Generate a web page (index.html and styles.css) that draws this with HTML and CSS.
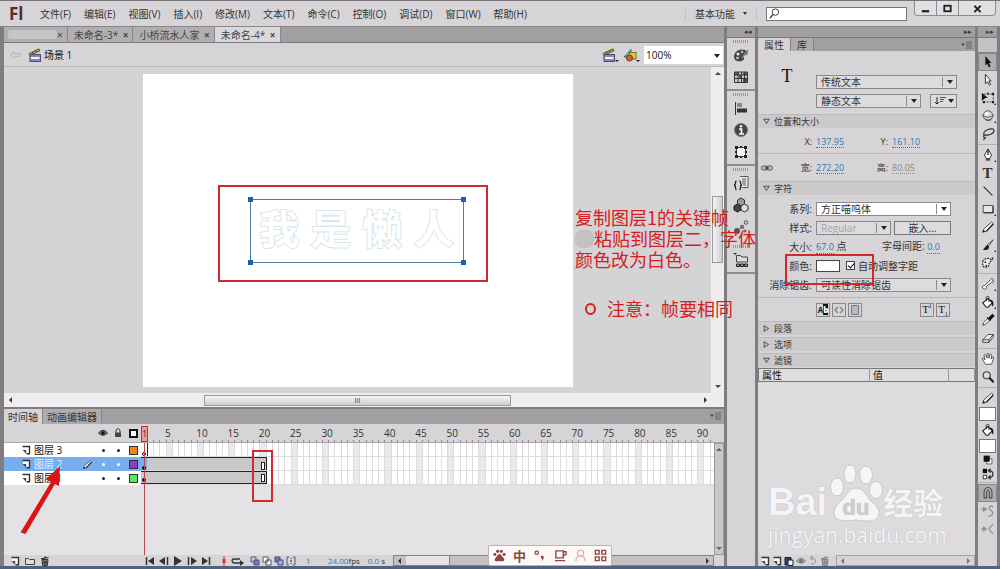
FILE: index.html
```html
<!DOCTYPE html>
<html lang="zh-CN">
<head>
    <meta charset="UTF-8">
    <meta name="viewport" content="width=device-width, initial-scale=1.0">
    <title>Flash - 未命名-4</title>
    <link rel="stylesheet" href="styles.css">
</head>
<body>
    <!-- shared icons -->
    <svg class="sprite" aria-hidden="true">
        <symbol id="clapper" viewBox="0 0 14 14">
            <rect x="2" y="6.500" width="10.500" height="7" fill="#8186bd" stroke="#4c4e72"/>
            <path d="M3 9h8.500v2H3z" fill="#f3f3fa"/>
            <path d="M1 5.500L11 .8l1 2L2 7.300z" fill="#a7a238" stroke="#4b4a20" stroke-width=".8"/>
            <path d="M4 4l1.500 1.500M7 2.700L8.500 4" stroke="#333" stroke-width=".8"/>
        </symbol>
        <symbol id="layer" viewBox="0 0 10 10">
            <path d="M2 1.500h6.500v7H6L2 5z" fill="#fff"/>
            <path d="M1.500 1.500h7v7.300H5.500" fill="none" stroke="#333" stroke-width="1.400"/>
            <path d="M1.500 5h3.700v3.800z" fill="#444"/>
        </symbol>
        <symbol id="trash" viewBox="0 0 10 10">
            <path d="M2 3.500h6L7.300 9.500H2.700z" fill="#777" stroke="#333"/>
            <path d="M1 2.800L8.500 1.500M4 1.500L6 .8M4.200 5v3M6 5v3" stroke="#222" fill="none"/>
        </symbol>
        <symbol id="pencil" viewBox="0 0 16 16">
            <path d="M2 14l1-3.500L12 2.500l2 1.800-8.500 8.700z" fill="#fff" stroke="#333"/>
            <path d="M6 13l8-8.500" stroke="#222" stroke-width="1.600"/>
            <path d="M2 14l1-3 2 2z" fill="#111"/>
        </symbol>
        <symbol id="bucket" viewBox="0 0 16 16">
            <path d="M2 9l6-5 5 5-5 5H6z" fill="#fff" stroke="#222" stroke-width="1.300"/>
            <path d="M6 7V3c0-2 3-2 3 0v5" fill="none" stroke="#222"/>
            <path d="M10 5.500c4 0 4.500 3 4 8-1-1-2-3-1.500-5z" fill="#111"/>
        </symbol>
        <symbol id="menu" viewBox="0 0 12 8">
            <path d="M0 2.500h4L2 5z" fill="#444"/>
            <path d="M5 1h6M5 3h6M5 5h6M5 7h6" stroke="#666"/>
        </symbol>
        <symbol id="eye" viewBox="0 0 10 8">
            <path d="M.5 4Q5-1.500 9.500 4 5 8.500.5 4z" fill="#777" stroke="#333"/>
            <circle cx="5" cy="4" r="1.800" fill="#111"/>
        </symbol>
    </svg>

    <div class="app">
        <header class="menubar">
            <div class="logo">Fl</div>
            <nav class="menus">
                <button>文件(F)</button>
                <button>编辑(E)</button>
                <button>视图(V)</button>
                <button>插入(I)</button>
                <button>修改(M)</button>
                <button>文本(T)</button>
                <button>命令(C)</button>
                <button>控制(O)</button>
                <button>调试(D)</button>
                <button>窗口(W)</button>
                <button>帮助(H)</button>
            </nav>
            <button class="workspace-switch">基本功能<span class="caret"></span></button>
            <div class="search">
                <svg viewBox="0 0 12 12"><circle cx="7" cy="4.500" r="3.500" fill="none" stroke="#333"/><path d="M4.500 7L1 11" stroke="#333" stroke-width="1.500"/></svg>
                <input type="text" aria-label="搜索">
            </div>
            <div class="window-buttons">
                <button aria-label="最小化"><svg viewBox="0 0 12 12"><path d="M2 9h8" stroke="#222" stroke-width="2.500"/></svg></button>
                <button aria-label="还原"><svg viewBox="0 0 12 12"><rect x="2.500" y="3" width="7" height="6" fill="none" stroke="#222" stroke-width="2"/></svg></button>
                <button class="close" aria-label="关闭"><svg viewBox="0 0 12 12"><path d="M2.500 3l7 7M9.500 3l-7 7" stroke="#222" stroke-width="2"/></svg></button>
            </div>
        </header>

        <div class="workspace">
            <main class="main">
                <div class="doc-tabs">
                    <button class="doc-tab first"><span class="smudge"></span>×</button>
                    <button class="doc-tab">未命名-3* <b>×</b></button>
                    <button class="doc-tab">小桥流水人家 <b>×</b></button>
                    <button class="doc-tab active">未命名-4* <b>×</b></button>
                </div>
                <div class="scene-bar">
                    <svg class="back" viewBox="0 0 12 10"><path d="M1 5l4-4v2.500h6v3H5V9z" fill="#cfcdd0" stroke="#bab8bb"/></svg>
                    <svg class="icon14"><use href="#clapper"/></svg>
                    <span class="scene-name">场景 1</span>
                    <button class="scene-button" aria-label="编辑场景"><svg class="icon14"><use href="#clapper"/></svg></button>
                    <button class="scene-button" aria-label="编辑元件"><svg class="icon14" viewBox="0 0 14 14"><path d="M1 9l7-7.500V9z" fill="#6fc3ae" stroke="#2c7663"/><rect x="6.500" y="4.500" width="6.500" height="6.500" fill="#d8d13c" stroke="#77711a"/><circle cx="6.500" cy="10" r="3" fill="#e4592f" stroke="#8a2c12"/></svg></button>
                    <div class="zoom select"><select aria-label="缩放"><option>100%</option></select></div>
                </div>

                <div class="stage">
                    <div class="pasteboard">
                        <div class="paper">
                            <div class="text-box">
                                <span>我</span><span>是</span><span>懒</span><span>人</span>
                                <i></i><i></i><i></i><i></i>
                            </div>
                            <div class="mark mark-text"></div>
                        </div>
                    </div>
                    <div class="vscroll"><span class="arrow up"></span><span class="thumb"></span><span class="arrow down"></span></div>
                </div>
                <div class="hscroll"><span class="arrow left"></span><span class="thumb">III</span><span class="arrow right"></span></div>

                <section class="timeline">
                    <div class="panel-tabs">
                        <button class="active">时间轴</button>
                        <button>动画编辑器</button>
                        <svg class="panel-menu"><use href="#menu"/></svg>
                    </div>
                    <div class="ruler-row">
                        <div class="layer-head">
                            <svg class="icon10"><use href="#eye"/></svg>
                            <svg class="icon10" viewBox="0 0 10 10"><path d="M3 5V3c0-3 4-3 4 0v2" fill="none" stroke="#333"/><path d="M2 4.500h6V9H2z" fill="#444"/></svg>
                            <span class="outline-box"></span>
                        </div>
                        <div class="ruler">
                            <span class="playhead">1</span>
                            <div class="ruler-marks">
                                <span>5</span><span>10</span><span>15</span><span>20</span><span>25</span><span>30</span>
                                <span>35</span><span>40</span><span>45</span><span>50</span><span>55</span><span>60</span>
                                <span>65</span><span>70</span><span>75</span><span>80</span><span>85</span><span>90</span>
                            </div>
                        </div>
                    </div>
                    <div class="layers">
                        <div class="layer-list">
                            <div class="layer">
                                <div class="layer-info"><svg class="icon10"><use href="#layer"/></svg><span class="name">图层 3</span><i class="dot"></i><i class="dot"></i><i class="chip orange"></i></div>
                                <div class="frames"><div class="first-frame"><i class="key empty"></i></div></div>
                            </div>
                            <div class="layer selected">
                                <div class="layer-info"><svg class="icon10"><use href="#layer"/></svg><span class="name">图层 2</span><svg class="edit"><use href="#pencil"/></svg><i class="dot"></i><i class="dot"></i><i class="chip purple"></i></div>
                                <div class="frames"><div class="span"><i class="key"></i><i class="end"></i></div></div>
                            </div>
                            <div class="layer">
                                <div class="layer-info"><svg class="icon10"><use href="#layer"/></svg><span class="name">图层 1</span><i class="dot"></i><i class="dot"></i><i class="chip green"></i></div>
                                <div class="frames"><div class="span"><i class="key"></i><i class="end"></i></div></div>
                            </div>
                            <div class="playline"></div>
                        </div>
                        <div class="layer-scroll"><span class="arrow up"></span><span class="arrow down"></span></div>
                    </div>
                    <div class="timeline-foot">
                        <div class="layer-tools">
                            <button aria-label="新建图层"><svg class="icon10"><use href="#layer"/></svg></button>
                            <button aria-label="新建文件夹"><svg class="icon10" viewBox="0 0 10 10"><path d="M.5 2.500h3l1 1h5v5h-9z" fill="#ddd" stroke="#444"/></svg></button>
                            <button aria-label="删除"><svg class="icon10"><use href="#trash"/></svg></button>
                        </div>
                        <div class="transport">
                            <button aria-label="第一帧"><svg class="icon10" viewBox="0 0 10 10"><path d="M9 1v8L3 5z" fill="#333"/><path d="M1.500 1v8" stroke="#333" stroke-width="1.500"/></svg></button>
                            <button aria-label="后退"><svg class="icon10" viewBox="0 0 10 10"><path d="M6 1v8L0 5z" fill="#333"/><path d="M8.500 1v8" stroke="#333" stroke-width="1.500"/></svg></button>
                            <button aria-label="播放"><svg class="icon10" viewBox="0 0 10 10"><path d="M1 0v10l8-5z" fill="#333"/></svg></button>
                            <button aria-label="前进"><svg class="icon10" viewBox="0 0 10 10"><path d="M4 1v8l6-4z" fill="#333"/><path d="M1.500 1v8" stroke="#333" stroke-width="1.500"/></svg></button>
                            <button aria-label="最后一帧"><svg class="icon10" viewBox="0 0 10 10"><path d="M1 1v8l6-4z" fill="#333"/><path d="M8.500 1v8" stroke="#333" stroke-width="1.500"/></svg></button>
                        </div>
                        <div class="onion">
                            <svg class="icon10" viewBox="0 0 10 10"><path d="M5 0v10" stroke="#c33"/><path d="M3.500 3h3v4h-3z" fill="#c33"/></svg>
                            <svg class="loop" viewBox="0 0 13 10"><path d="M9 3H3c-3 0-2 4 0 4h7" fill="none" stroke="#333" stroke-width="1.500"/><path d="M9 4l4 3-4 3z" fill="#333"/></svg>
                            <svg class="icon10" viewBox="0 0 10 10"><path d="M1 1h5v5H1z" fill="#ccd" stroke="#558"/><path d="M4 4h5v5H4z" fill="#77b" stroke="#558"/></svg>
                            <svg class="icon10" viewBox="0 0 10 10"><path d="M1 1h5v5H1zM4 4h5v5H4z" fill="#fff" stroke="#555"/></svg>
                            <svg class="icon10" viewBox="0 0 10 10"><path d="M1 1h5v5H1z" fill="#77b" stroke="#448"/><path d="M4 4h5v5H4z" fill="#aac" stroke="#448"/></svg>
                            <svg class="icon10" viewBox="0 0 10 10"><path d="M3 1H1v8h2M7 1h2v8H7" fill="none" stroke="#557"/><path d="M4 5h2M5 2v1M5 7v1" stroke="#222"/></svg>
                        </div>
                        <div class="frame-info"><a href="#">1</a><span class="fps"><a href="#">24.00</a>fps</span><span><a href="#">0.0</a> s</span></div>
                        <div class="frame-scroll"><span class="arrow left"></span><span class="thumb"></span><span class="arrow right"></span></div>
                    </div>
                </section>
            </main>

            <aside class="dock">
                <div class="strip">◂◂</div>
                <div class="dock-group">
                    <svg viewBox="0 0 16 16"><path d="M1 10c0-6 6-9 11-7 4 2 3 5 0 5-2 0-1 2-1 4s-9 5-10-2z" fill="#444"/><circle cx="5" cy="7" r="1.500" fill="#eee"/><circle cx="9" cy="5" r="1.300" fill="#bbb"/><circle cx="4.500" cy="11" r="1.300" fill="#ccc"/><path d="M9 11l6-8" stroke="#888" stroke-width="1.500"/></svg>
                    <svg viewBox="0 0 16 16"><path d="M1.500 3h13v10.500h-13z" fill="#ccc" stroke="#333"/><path d="M2 3h4v3H2zM6 6h3v4H6zM10 3h4v3h-4zM10 9h4v4h-4z" fill="#555"/><path d="M5 3v10M8.500 3v10M11.500 3v10M2 6h12M2 9.500h12" stroke="#333"/></svg>
                </div>
                <div class="dock-group">
                    <svg viewBox="0 0 16 16"><path d="M2.500 2v13" stroke="#333"/><path d="M4 3h5v4H4z" fill="#888"/><path d="M4 8.500h10v4H4z" fill="#333"/></svg>
                    <svg viewBox="0 0 16 16"><circle cx="8" cy="8" r="6.500" fill="#444" stroke="#777"/><path d="M6 7h2.500v4.500M6 12h5" fill="none" stroke="#fff" stroke-width="1.700"/><circle cx="8" cy="4.300" r="1.200" fill="#fff"/></svg>
                    <svg viewBox="0 0 16 16"><path d="M3.500 3.500h9v9h-9z" fill="#f5f5f5" stroke="#444"/><path d="M2 2h3v3H2zM11 2h3v3h-3zM2 11h3v3H2zM11 11h3v3h-3zM7 2h2v2H7zM7 12h2v2H7zM2 7h2v2H2zM12 7h2v2h-2z" fill="#222"/></svg>
                </div>
                <div class="dock-group tall">
                    <svg viewBox="0 0 16 16"><path d="M7 1.500h8v11H9" fill="#eee" stroke="#555"/><path d="M9 4h4M9 6h4M9 8h4M10 10h3" stroke="#555"/><path d="M3.500 6c-2 0 0 4-2.500 4 2.500 0 .5 4.500 2.500 4.500M6.500 6c2 0 0 4 2.500 4-2.500 0-.5 4.500-2.500 4.500" fill="none" stroke="#222" stroke-width="1.300"/></svg>
                    <svg viewBox="0 0 16 16"><path d="M8 1l3.500 2v4L8 9 4.500 7V3z" fill="#999" stroke="#333"/><path d="M4.500 7L8 9v4l-3.500 2L1 13V9z" fill="#444" stroke="#222"/><path d="M11.500 7L15 9v4l-3.500 2L8 13V9z" fill="#ddd" stroke="#333"/></svg>
                    <svg viewBox="0 0 16 16"><circle cx="4" cy="12" r="3" fill="#555"/><circle cx="9" cy="8" r="2.300" fill="#777"/><circle cx="13" cy="3.500" r="1.800" fill="#ccc" stroke="#555"/><circle cx="12" cy="12" r="1.500" fill="#666"/></svg>
                </div>
                <div class="dock-group">
                    <svg viewBox="0 0 16 16"><path d="M0 1h4L2 3z" fill="#333"/><path d="M3.500 3.500h4l1 1.500h6v5h-11z" fill="#ddd" stroke="#444"/><path d="M3.500 12h3v2.500h-3zM7.500 12h3v2.500h-3zM11.500 12h3v2.500h-3z" fill="#999" stroke="#222"/></svg>
                </div>
            </aside>

            <aside class="props">
                <div class="strip">▸▸</div>
                <div class="panel-tabs">
                    <button class="active">属性</button>
                    <button>库</button>
                    <svg class="panel-menu"><use href="#menu"/></svg>
                </div>
                <div class="text-type">
                    <span class="big-t">T</span>
                    <div class="type-fields">
                        <div class="select"><select aria-label="文本引擎"><option>传统文本</option></select></div>
                        <div class="type-row">
                            <div class="select"><select aria-label="文本类型"><option>静态文本</option></select></div>
                            <button class="direction" aria-label="改变文本方向"><svg viewBox="0 0 20 10"><path d="M3 1v7M1 6l2 2 2-2" fill="none" stroke="#222"/><path d="M6 1.500h6M6 3.500h4M6 5.500h3" stroke="#555"/><path d="M14 3h6l-3 4z" fill="#222"/></svg></button>
                        </div>
                    </div>
                </div>

                <h2 class="section open">位置和大小</h2>
                <div class="coords"><span></span><label>X:</label><a href="#">137.95</a><label>Y:</label><a href="#">161.10</a></div>
                <div class="coords lined"><svg class="link" viewBox="0 0 12 6"><rect x=".5" y="1" width="6" height="4" rx="2" fill="none" stroke="#444"/><rect x="5.500" y="1" width="6" height="4" rx="2" fill="none" stroke="#444"/><path d="M3 3h6" stroke="#444"/></svg><label>宽:</label><a href="#">272.20</a><label>高:</label><a href="#" class="off">80.05</a></div>

                <h2 class="section open">字符</h2>
                <div class="fields">
                    <div class="field"><label for="family">系列:</label><div class="select white wide"><select id="family"><option>方正喵呜体</option></select></div></div>
                    <div class="field"><label for="style">样式:</label><div class="select disabled"><select id="style" disabled><option>Regular</option></select></div><button class="embed">嵌入...</button></div>
                    <div class="field"><label>大小:</label><span><a href="#">67.0</a> 点</span><span class="spacing">字母间距: <a href="#">0.0</a></span></div>
                    <div class="field"><label for="color">颜色:</label><button id="color" class="swatch"></button><input type="checkbox" id="kern" checked><label for="kern" class="kern">自动调整字距</label></div>
                    <div class="field"><label for="alias">消除锯齿:</label><div class="select wide"><select id="alias"><option>可读性消除锯齿</option></select></div></div>
                </div>
                <div class="format-row">
                    <button class="ab">A<b>b</b></button>
                    <button class="off" aria-label="HTML"><svg viewBox="0 0 12 12"><path d="M5 3L2 6l3 3M7 3l3 3-3 3" fill="none" stroke="#8a888b" stroke-width="1.500"/></svg></button>
                    <button class="off" aria-label="边框"><svg viewBox="0 0 12 12"><path d="M2.500 1.500h7v9h-7z" fill="#bbb9bc" stroke="#77757a"/></svg></button>
                    <button class="serif sup">T<sup>1</sup></button>
                    <button class="serif">T<sub>1</sub></button>
                </div>
                <h2 class="section">段落</h2>
                <h2 class="section">选项</h2>
                <h2 class="section open">滤镜</h2>
                <table class="filters">
                    <thead><tr><th>属性</th><th>值</th><th></th></tr></thead>
                </table>
                <div class="filter-body">
                    <div class="watermark">
                        <div class="brand">
                            <span class="bai">Bai</span>
                            <svg viewBox="0 0 54 58">
                                <g fill="#f5f4f6" stroke="#c9c7ca"><ellipse cx="8" cy="23" rx="6.500" ry="9"/><ellipse cx="21" cy="10" rx="6" ry="9"/><ellipse cx="37" cy="11" rx="6.500" ry="9"/><ellipse cx="47" cy="26" rx="6.500" ry="8.500"/><path d="M27 24c7 0 9 6 14 12 5 4 9 8 9 13 0 9-10 9-23 7-13 2-22 1-22-7 0-6 5-10 9-14 5-6 7-11 13-11z"/></g>
                                <text x="27" y="51" text-anchor="middle">du</text>
                            </svg>
                            <span class="jingyan">经验</span>
                        </div>
                        <div class="site">jingyan.baidu.com</div>
                    </div>
                </div>
                <div class="filter-foot">
                    <svg class="icon10"><use href="#layer"/></svg>
                    <svg class="icon10"><use href="#layer"/></svg>
                    <svg class="icon10" viewBox="0 0 10 10"><path d="M1 1.500h6v7.500H1z" fill="#346" stroke="#123"/><path d="M4 4h5v5.500H4z" fill="#eef" stroke="#123"/></svg>
                    <svg class="icon10 faded"><use href="#eye"/></svg>
                    <svg class="icon10 faded" viewBox="0 0 10 10"><path d="M3 2c6-1 6 7 0 6M5 0L2 2l3 2" fill="none" stroke="#555"/></svg>
                    <svg class="icon10 faded"><use href="#trash"/></svg>
                    <div class="frame-scroll pale"><span class="arrow left"></span><span class="arrow right"></span></div>
                </div>
            </aside>

            <aside class="tools">
                <div class="strip">▸▸</div>
                <div class="tools-head"></div>
                <button class="on" aria-label="选择"><svg viewBox="0 0 16 16"><path d="M5 1l7 8H9l2 4-2 1-2-4-2 2z" fill="#111"/></svg></button>
                <button aria-label="部分选取"><svg viewBox="0 0 16 16"><path d="M5 1.500l6.500 7.500H9l2 4-1.500 1-2-4L5 12z" fill="#fff" stroke="#222"/></svg></button>
                <button class="more" aria-label="任意变形"><svg viewBox="0 0 16 16"><path d="M1 2l7 6H5l-4 3z" fill="#111"/><path d="M4 3.500h10v9H3" fill="none" stroke="#222" stroke-dasharray="2 1.500"/><path d="M7 2h2v2H7zM12.500 2h2.500v2.500h-2.500zM12.500 11.500h2.500v2.500h-2.500zM2 11.500h2.500v2.500H2z" fill="#222"/></svg></button>
                <button class="more" aria-label="3D 旋转"><svg viewBox="0 0 16 16"><circle cx="8" cy="7.500" r="5.500" fill="#ccc" stroke="#555"/><circle cx="7" cy="5.500" r="2.500" fill="#f4f4f4"/><path d="M3 10c3 3 8 3 10 0l-2 3H6z" fill="#444"/><path d="M1 7c3 3 11 3 14 0" fill="none" stroke="#555"/></svg></button>
                <button aria-label="套索"><svg viewBox="0 0 16 16"><path d="M4 10C-1 5 14-1 15 4c0 4-7 6-10 5-3 0-3 3 0 3-1 1-2 2-2 3" fill="none" stroke="#333" stroke-width="1.300"/></svg></button>
                <hr>
                <button class="more" aria-label="钢笔"><svg viewBox="0 0 16 16"><path d="M8 1l4 7-2 4H6L4 8z" fill="#fff" stroke="#222"/><path d="M8 2v6M5.500 13.500h5" stroke="#222" stroke-width="1.500"/></svg></button>
                <button class="letter" aria-label="文本">T</button>
                <button aria-label="线条"><svg viewBox="0 0 16 16"><path d="M3 3l10 10" stroke="#222" stroke-width="1.300"/></svg></button>
                <button class="more" aria-label="矩形"><svg viewBox="0 0 16 16"><rect x="2.500" y="4" width="11" height="8" fill="#e7e7e7" stroke="#444"/><path d="M3 12.500h11V5" fill="none" stroke="#222"/></svg></button>
                <button aria-label="铅笔"><svg><use href="#pencil"/></svg></button>
                <button class="more" aria-label="刷子"><svg viewBox="0 0 16 16"><path d="M14 2L7 8l1.500 1.500z" fill="#fff" stroke="#444"/><path d="M8 8c-3 0-3 4-6 5 4 2 8 0 7-4z" fill="#222"/></svg></button>
                <button aria-label="Deco"><svg viewBox="0 0 16 16"><path d="M2 6c3-4 8-4 9-2l3-2-5 7c1 4-5 5-7 2z" fill="#eee" stroke="#222" stroke-width="1.300" stroke-dasharray="2 1"/><circle cx="5" cy="7" r="1" fill="#222"/><circle cx="6" cy="11" r="1" fill="#222"/></svg></button>
                <hr>
                <button class="more" aria-label="骨骼"><svg viewBox="0 0 16 16"><path d="M11 3c1-3 4 0 2 1 3 0 1 4-1 2l-6 5c1 3-2 4-3 2-3 0-1-4 1-3z" fill="#fff" stroke="#333"/></svg></button>
                <button class="more" aria-label="颜料桶"><svg><use href="#bucket"/></svg></button>
                <button aria-label="滴管"><svg viewBox="0 0 16 16"><path d="M2 14l1-3 5-5 2 2-5 5z" fill="#fff" stroke="#333"/><path d="M7 5l4 4M9 6l4-4 1.500 1.500-4 4z" stroke="#111" fill="#111" stroke-width="1.500"/></svg></button>
                <button aria-label="橡皮擦"><svg viewBox="0 0 16 16"><path d="M2 10l6-6h6l-5 6zM2 10v3h7v-3M9 13l5-6V4" fill="#eee" stroke="#333"/></svg></button>
                <hr>
                <button aria-label="手形"><svg viewBox="0 0 16 16"><path d="M5 14L1.500 8c0-2 2-1 3 1L3.500 4c0-2 2-1 2 0L7 7V2.500c0-2 2-1 2 0V7l1-4c1-2 2 0 2 1l-.5 4 1-2c2-1 2 0 1.500 2L12 14z" fill="#fff" stroke="#333" stroke-width=".9"/></svg></button>
                <button aria-label="缩放"><svg viewBox="0 0 16 16"><circle cx="6.500" cy="6" r="4" fill="#ddd" stroke="#444" stroke-width="1.400"/><path d="M9.500 9l5 5" stroke="#222" stroke-width="2.500"/></svg></button>
                <hr>
                <button aria-label="笔触颜色"><svg><use href="#pencil"/></svg></button>
                <button class="tool-swatch" aria-label="笔触样本"></button>
                <button aria-label="填充颜色"><svg><use href="#bucket"/></svg></button>
                <button class="tool-swatch" aria-label="填充样本"></button>
                <button class="small" aria-label="黑白"><svg viewBox="0 0 16 16"><path d="M6.500 6.500h6v6h-6z" fill="#fff" stroke="#555"/><path d="M3 3h7v7H3z" fill="#111"/></svg></button>
                <button class="small" aria-label="交换颜色"><svg viewBox="0 0 16 16"><path d="M2 2h5v5H2z" fill="#111"/><path d="M2.500 9.500h4v4h-4z" fill="#fff" stroke="#222"/><path d="M9 4c6 0 6 8 1 8M11 2L8.500 4 11 6.500M11 9.500L8.500 12l2.500 2" fill="none" stroke="#222" stroke-width="1.300"/></svg></button>
                <hr>
                <button class="on" aria-label="贴紧至对象"><svg viewBox="0 0 16 16"><path d="M3.500 14V7c0-7 9-7 9 0v7M6.500 14V7c0-3 3-3 3 0v7M3.500 13.500h3M9.500 13.500h3" fill="none" stroke="#333"/></svg></button>
                <button aria-label="平滑"><svg viewBox="0 0 16 16"><path d="M0 6h4M3 4l3 2-3 2zM14 3c-4-2-7 2-3 4s3 7-3 7" fill="none" stroke="#8a888b" stroke-width="1.300"/></svg></button>
                <button aria-label="伸直"><svg viewBox="0 0 16 16"><path d="M0 8h4M3 6l3 2-3 2zM14 2l-5 6 5 6" fill="none" stroke="#8a888b" stroke-width="1.300"/></svg></button>
            </aside>
        </div>

        <!-- tutorial notes drawn over the window -->
        <div class="note">
            <p>复制图层1的关键帧</p>
            <p class="indent"><span class="blot"></span>粘贴到图层二，字体</p>
            <p>颜色改为白色。</p>
        </div>
        <p class="tip"><span class="ring"></span>注意：帧要相同</p>
        <div class="mark mark-color"></div>
        <div class="mark mark-frame"></div>
        <svg class="pointer" viewBox="0 0 44 70"><path d="M1.500 67.500L32 17l-5-3L41 1l-1 20-4-2L6.500 69z" fill="#dc1414"/></svg>

        <div class="ime">
            <button aria-label="百度输入法"><svg viewBox="0 0 14 14"><circle cx="2" cy="6" r="1.600"/><circle cx="5" cy="2.500" r="1.700"/><circle cx="9" cy="2.500" r="1.700"/><circle cx="12" cy="6" r="1.600"/><path d="M7 5.500c2 0 3 3 5 5 1 3-2 3-5 2.500C4 13.500 1 13.500 2 10.500c2-2 3-5 5-5z"/></svg></button>
            <button>中</button>
            <button aria-label="标点"><svg viewBox="0 0 14 14"><circle cx="4" cy="4" r="1.800" fill="none" stroke="#8c4540" stroke-width="1.300"/><path d="M9 7.500c3-1 4 3 0 5.500l1-2.500C8 10 8 8 9 7.500z"/></svg></button>
            <button aria-label="皮肤"><svg viewBox="0 0 14 14"><path d="M2 2h8v7.500H2zM10 3h3v3l-3 1M1 12.500h11" fill="none" stroke="#8c4540" stroke-width="1.500"/></svg></button>
            <button aria-label="账号"><svg viewBox="0 0 14 14"><circle cx="7" cy="4.500" r="3.300" fill="none" stroke="#d8b5b0" stroke-width="1.300"/><path d="M2 13.500c0-4 2-6 5-6s5 2 5 6" fill="none" stroke="#d8b5b0" stroke-width="1.300"/></svg></button>
            <button aria-label="工具"><svg viewBox="0 0 14 14"><path d="M1.500 1.500h4v4h-4zM8.500 1.500h4v4h-4zM1.500 8.500h4v4h-4zM8.500 8.500h4v4h-4z" fill="none" stroke="#8c4540" stroke-width="1.500"/></svg></button>
        </div>
    </div>
</body>
</html>
```
FILE: styles.css
```css
* {
    margin: 0;
    padding: 0;
    box-sizing: border-box;
}

body {
    font-family: "Open Sans", "Noto Sans CJK SC", sans-serif;
    font-size: 10px;
    line-height: 14px;
    color: #333;
    background-color: #d6d4d7;
}

button, input, select {
    font: inherit;
    color: inherit;
    background: none;
    border: none;
}

a {
    color: #2f78b4;
    text-decoration: none;
    border-bottom: 1px dotted #2f78b4;
}

.sprite {
    position: absolute;
    width: 0;
    height: 0;
}

.icon10 {
    width: 10px;
    height: 10px;
    flex-shrink: 0;
}

.icon14 {
    width: 14px;
    height: 14px;
}

.faded {
    opacity: 0.5;
}

.app {
    position: relative;
    height: 100vh;
    min-height: 560px;
    display: flex;
    flex-direction: column;
    overflow: hidden;
    border-top: 1px solid #77727a;
    border-bottom: 3px solid #50627e;
}

/* menu bar */
.menubar {
    height: 26px;
    display: flex;
    align-items: center;
    padding: 0 4px 0 9px;
    border-bottom: 1px solid #88868a;
}

.logo {
    width: 31px;
    font-size: 17px;
    font-weight: 700;
    color: #5a2d2d;
}

.menus {
    flex: 1;
    display: flex;
    gap: 13px;
}

.workspace-switch {
    display: flex;
    align-items: center;
    gap: 8px;
    padding: 0 9px;
    margin-right: 9px;
    border-left: 1px solid #c2c0c3;
    border-right: 1px solid #c2c0c3;
}

.caret {
    border: 2px solid transparent;
    border-top: 3px solid #333;
    border-bottom: 0;
}

.search {
    width: 141px;
    height: 14px;
    display: flex;
    align-items: center;
    background-color: #fff;
    border: 1px solid #77757a;
    margin-right: 7px;
}

.search svg {
    width: 11px;
    height: 11px;
    margin-left: 2px;
}

.search input {
    flex: 1;
    min-width: 0;
    outline: none;
}

.window-buttons {
    align-self: flex-start;
    height: 15px;
    display: flex;
    border: 1px solid #8d8b8f;
    border-top: none;
    border-radius: 0 0 4px 4px;
    background-color: #e2e0e3;
}

.window-buttons button {
    width: 22px;
    display: flex;
    align-items: center;
    justify-content: center;
    border-right: 1px solid #8d8b8f;
}

.window-buttons .close {
    width: 36px;
    border-right: none;
}

.window-buttons svg {
    width: 11px;
    height: 11px;
}

/* columns */
.workspace {
    flex: 1;
    min-height: 0;
    display: flex;
    gap: 3px;
    padding: 0 3px 0 4px;
    background-color: #7f7d81;
}

.main {
    flex: 1;
    min-width: 0;
    display: flex;
    flex-direction: column;
}

.doc-tabs {
    height: 16px;
    display: flex;
    background-color: #a19fa2;
    border-bottom: 1px solid #7b797c;
}

.doc-tab {
    padding: 0 4px 0 6px;
    background-color: #b0aeb1;
    border-right: 1px solid #8a888b;
    color: #444;
}

.doc-tab b {
    margin-left: 2px;
}

.doc-tab.first {
    display: flex;
    align-items: center;
    padding: 0 4px;
}

.doc-tab.active {
    background-color: #dad8db;
}

.smudge {
    width: 49px;
    height: 9px;
    background-color: #c6c4c7;
    border-radius: 3px;
}

.scene-bar {
    height: 24px;
    display: flex;
    align-items: center;
    background-color: #d6d4d7;
    padding: 0 1px 0 5px;
    border-bottom: 1px solid #b9b7ba;
}

.back {
    width: 12px;
    height: 10px;
    margin-right: 7px;
}

.scene-name {
    flex: 1;
    margin-left: 2px;
    color: #111;
}

.scene-button {
    position: relative;
    width: 21px;
    height: 14px;
    text-align: left;
}

.scene-button::after {
    content: "";
    position: absolute;
    right: 4px;
    bottom: 0;
    border: 2px solid transparent;
    border-top-color: #222;
    border-bottom: 0;
}

/* drop-downs */
.select {
    position: relative;
    flex: 1;
    height: 14px;
    background-color: #dddbde;
    border: 1px solid #8a888c;
}

.select select {
    display: block;
    width: 100%;
    height: 12px;
    line-height: 12px;
    padding-left: 4px;
    appearance: none;
    outline: none;
    opacity: 1;
}

.select::before {
    content: "";
    position: absolute;
    right: 13px;
    top: 1px;
    bottom: 1px;
    border-left: 1px solid #8a888c;
}

.select::after {
    content: "";
    position: absolute;
    right: 3px;
    top: 4px;
    border: 3px solid transparent;
    border-top: 4px solid #222;
    border-bottom: 0;
    pointer-events: none;
}

.select.white {
    background-color: #fff;
}

.select.wide {
    flex: none;
    width: 135px;
}

.select.disabled {
    flex: none;
    width: 75px;
    color: #a5a3a6;
}

.select.zoom {
    flex: none;
    width: 79px;
    height: 18px;
    background-color: #fff;
    border: none;
    color: #111;
}

.select.zoom select {
    height: 18px;
    padding-left: 2px;
}

.select.zoom::before {
    display: none;
}

.select.zoom::after {
    top: 8px;
}

/* stage */
.stage {
    flex: 1;
    min-height: 0;
    display: flex;
}

.pasteboard {
    flex: 1;
    display: flex;
    align-items: center;
    justify-content: center;
    background-color: #d4d3d5;
}

.paper {
    position: relative;
    width: 430px;
    height: 313px;
    background-color: #fff;
}

.text-box {
    position: absolute;
    left: 107px;
    top: 125px;
    width: 214px;
    height: 64px;
    display: flex;
    padding: 0 3px;
    border: 1px solid #4f7d9d;
}

.text-box span {
    flex: 1;
    text-align: center;
    font-family: "Noto Sans CJK SC", sans-serif;
    font-size: 40px;
    font-weight: 700;
    line-height: 54px;
    color: #fff;
    -webkit-text-stroke: 2px #d9e6ea;
    paint-order: stroke fill;
}

.text-box i {
    position: absolute;
    width: 5px;
    height: 5px;
    background-color: #1f5fa8;
}

.text-box i:nth-of-type(1) { left: -3px; top: -3px; }
.text-box i:nth-of-type(2) { right: -3px; top: -3px; }
.text-box i:nth-of-type(3) { left: -3px; bottom: -3px; }
.text-box i:nth-of-type(4) { right: -3px; bottom: -3px; }

.mark {
    position: absolute;
    border: 2px solid #d02a2e;
}

.mark-text {
    left: 75px;
    top: 111px;
    width: 270px;
    height: 97px;
}

.mark-color {
    right: 126px;
    top: 253px;
    width: 89px;
    height: 31px;
}

.mark-frame {
    left: 252px;
    bottom: 64px;
    width: 21px;
    height: 52px;
}

/* scrollbars */
.arrow {
    width: 0;
    height: 0;
    border: 3px solid transparent;
}

.arrow.up { border-bottom-color: #444; border-top: 0; }
.arrow.down { border-top-color: #444; border-bottom: 0; }
.arrow.left { border-right-color: #333; border-left: 0; }
.arrow.right { border-left-color: #333; border-right: 0; }

.vscroll {
    width: 13px;
    display: flex;
    flex-direction: column;
    align-items: center;
    padding: 5px 0;
    background-color: #efedf0;
}

.vscroll .thumb {
    width: 11px;
    height: 67px;
    margin: 121px 0 auto;
    background: linear-gradient(to right, #f5f5f6, #cfcdd0);
    border: 1px solid #9a989b;
}

.hscroll {
    height: 14px;
    display: flex;
    align-items: center;
    padding: 0 17px 0 5px;
    background-color: #efedf0;
    margin-bottom: 2px;
}

.hscroll .thumb {
    width: 307px;
    height: 11px;
    margin: 0 auto 0 192px;
    text-align: center;
    font-size: 7px;
    line-height: 9px;
    background: linear-gradient(#f5f5f6, #cfcdd0);
    border: 1px solid #9a989b;
}

/* timeline */
.panel-tabs {
    height: 15px;
    display: flex;
    background-color: #a19fa2;
}

.panel-tabs button {
    padding: 0 4px;
    background-color: #aeacaf;
    border-right: 1px solid #858386;
    line-height: 14px;
}

.panel-tabs .active {
    background-color: #d6d4d7;
}

.panel-menu {
    width: 12px;
    height: 8px;
    margin: 3px 2px 0 auto;
}

.ruler-row {
    height: 19px;
    display: flex;
    background-color: #d6d4d7;
    border-bottom: 1px solid #a9a7aa;
}

.layer-head {
    width: 137px;
    display: flex;
    align-items: center;
    justify-content: flex-end;
    gap: 5px;
    padding-right: 3px;
}

.outline-box {
    width: 9px;
    height: 9px;
    margin-left: 1px;
    background-color: #fff;
    border: 2px solid #111;
}

.ruler {
    position: relative;
    flex: 1;
    padding: 0 8px 0 12px;
}

.playhead {
    position: absolute;
    z-index: 1;
    left: 0;
    top: 2px;
    width: 7px;
    height: 16px;
    font-size: 9px;
    text-align: center;
    background-color: #ee9a9a;
    border: 1px solid #bb3434;
}

.ruler-marks {
    height: 18px;
    display: grid;
    grid-template-columns: repeat(18, 1fr);
    line-height: 19px;
    background: repeating-linear-gradient(to right, #8c8a8d 0 1px, transparent 1px calc(100% / 90)) bottom / 100% 2px no-repeat;
}

.ruler-marks span {
    padding-left: 12px;
}

.layers {
    display: flex;
    height: 112px;
    background-color: #e4e2e5;
}

.layer-list {
    position: relative;
    flex: 1;
}

.layer {
    height: 14px;
    display: flex;
    background-color: #fff;
    color: #111;
}

.layer-info {
    width: 137px;
    display: flex;
    align-items: center;
    padding: 0 3px 0 17px;
}

.layer-info .name {
    flex: 1;
    margin-left: 3px;
    line-height: 13px;
}

.edit {
    width: 11px;
    height: 11px;
    margin-right: 9px;
}

.dot {
    width: 3px;
    height: 3px;
    margin-right: 12px;
    border-radius: 50%;
    background-color: #222;
}

.dot + .dot {
    margin-right: 9px;
}

.selected .layer-info {
    background-color: #77aeee;
    color: #e2f0ff;
}

.selected .dot {
    background-color: #fff;
}

.chip {
    width: 9px;
    height: 9px;
    border: 1px solid #333;
}

.orange { background-color: #f5831f; }
.purple { background-color: #9338c4; }
.green { background-color: #4df05a; }

.frames {
    position: relative;
    flex: 1;
    padding-left: 12px;
    overflow: hidden;
    border-bottom: 1px solid #dddbde;
    background-color: #fff;
}

/* five frames per tile, the middle one shaded */
.frames::before {
    content: "";
    display: block;
    height: 100%;
    margin-right: -2px;
    background:
        repeating-linear-gradient(to right, #dddbde 0 1px, transparent 1px calc(100% / 90)),
        repeating-linear-gradient(to right, transparent 0 calc(100% / 45), #ebe9ec calc(100% / 45) calc(100% / 30), transparent calc(100% / 30) calc(100% / 18));
}

.span {
    position: absolute;
    left: 0;
    top: 0;
    width: 126px;
    height: 14px;
    background-color: #cac8cb;
    border: 1px solid #222;
    border-left: none;
    border-bottom: none;
}

.layer:nth-child(3) .span {
    height: 13px;
    border-bottom: 1px solid #222;
}

.first-frame {
    position: absolute;
    left: 0;
    top: 0;
    width: 7px;
    height: 14px;
    border-right: 1px solid #222;
}

.key {
    position: absolute;
    left: 1px;
    bottom: 1px;
    width: 4px;
    height: 4px;
    border-radius: 50%;
    background-color: #111;
}

.key.empty {
    background-color: #fff;
    border: 1px solid #111;
}

.selected .span {
    background-image: linear-gradient(to right, #77aeee 6px, transparent 6px);
}

.end {
    position: absolute;
    right: 1px;
    bottom: 1px;
    width: 4px;
    height: 8px;
    background-color: #fff;
    border: 1px solid #222;
}

.playline {
    position: absolute;
    left: 140px;
    top: 0;
    bottom: 0;
    border-left: 1px solid #b8494c;
}

.layer-scroll {
    width: 10px;
    display: flex;
    flex-direction: column;
    align-items: center;
    justify-content: space-between;
    padding: 4px 0;
    background-color: #c3c1c4;
    border: 1px solid #8a888b;
    opacity: 0.8;
}

.timeline-foot {
    height: 11px;
    display: flex;
    align-items: center;
    background-color: #d6d4d7;
    line-height: 11px;
    font-size: 8px;
}

.timeline-foot button {
    display: flex;
}

.layer-tools {
    width: 137px;
    display: flex;
    gap: 5px;
    padding-left: 6px;
}

.transport {
    display: flex;
    gap: 4px;
    padding-left: 4px;
}

.onion {
    display: flex;
    gap: 2px;
    margin: 0 10px 0 8px;
}

.loop {
    width: 13px;
    height: 10px;
    margin-right: 4px;
}

.frame-info {
    flex: none;
    width: 87px;
    display: flex;
    gap: 8px;
}

.frame-info .fps {
    margin-left: auto;
}

.frame-info span:last-child {
    margin-right: 8px;
}

.frame-info a {
    border-bottom: none;
}

.frame-scroll {
    flex: 1;
    height: 11px;
    display: flex;
    align-items: center;
    justify-content: space-between;
    padding: 0 4px;
    margin-right: 10px;
    background-color: #c3c1c4;
    border: 1px solid #858386;
}

.frame-scroll .thumb {
    width: 44px;
    height: 9px;
    margin: 0 auto 0 5px;
    background-color: #e6e4e7;
    border-right: 1px solid #858386;
}

/* icon dock */
.strip {
    height: 11px;
    padding-right: 3px;
    text-align: right;
    font-size: 7px;
    line-height: 9px;
    background-color: #a19fa2;
    border-bottom: 1px solid #7b797c;
}

.dock {
    width: 28px;
    display: flex;
    flex-direction: column;
    background-color: #d6d4d7;
}

.dock-group {
    display: flex;
    flex-direction: column;
    align-items: center;
    gap: 6px;
    padding-bottom: 4px;
    border-bottom: 2px solid #8f8d90;
}

.dock-group::before {
    content: "";
    width: 16px;
    height: 3px;
    margin: 2px 0 -2px;
    background: repeating-linear-gradient(to right, #99979a 0 1px, transparent 1px 2px);
}

.dock-group.tall {
    border-bottom: none;
    padding-bottom: 8px;
}

.dock-group svg {
    width: 16px;
    height: 16px;
}

/* properties */
.props {
    width: 217px;
    display: flex;
    flex-direction: column;
    background-color: #d6d4d7;
}

.props .panel-tabs {
    height: 13px;
}

.props .panel-tabs button {
    padding: 0 6px;
    line-height: 12px;
}

.text-type {
    display: flex;
    padding: 24px 18px 6px 0;
}

.big-t {
    width: 58px;
    text-align: center;
    font: 18px "Liberation Serif", serif;
    line-height: 2px;
    color: #111;
}

.type-fields {
    flex: 1;
    display: flex;
    flex-direction: column;
    gap: 5px;
}

.type-fields > .select {
    flex: none;
}

.type-row {
    display: flex;
    gap: 9px;
}

.direction {
    width: 27px;
    height: 14px;
    border: 1px solid #8a888c;
    background-color: #dddbde;
}

.direction svg {
    display: block;
    width: 20px;
    height: 10px;
    margin: 0 auto;
}

.section {
    height: 14px;
    display: flex;
    align-items: center;
    padding-left: 5px;
    font-size: 9px;
    font-weight: 400;
    background-color: #cbc9cc;
    border-top: 1px solid #bbb9bc;
}

.section + .section {
    margin-top: 2px;
}

/* collapsed / open triangle */
.section::before {
    content: "";
    width: 7px;
    height: 7px;
    margin-right: 4px;
    background-color: #555;
    clip-path: polygon(evenodd, 10% 0, 90% 50%, 10% 100%, 10% 0, 24% 24%, 24% 76%, 68% 50%, 24% 24%);
}

.section.open::before {
    clip-path: polygon(evenodd, 0 10%, 100% 10%, 50% 90%, 0 10%, 24% 24%, 50% 68%, 76% 24%, 24% 24%);
}

.coords {
    height: 25px;
    display: grid;
    grid-template-columns: 14px 36px 50px 18px 1fr;
    column-gap: 4px;
    align-items: center;
    padding-top: 2px;
    font-size: 9px;
    line-height: 11px;
}

.coords.lined {
    height: 28px;
    padding-top: 0;
    border-top: 1px solid #bbb9bc;
}

.coords label {
    text-align: right;
}

.coords a {
    justify-self: start;
}

.coords .off {
    color: #8a888b;
    border-color: #8a888b;
}

.link {
    width: 12px;
    height: 6px;
    margin-left: 3px;
}

.fields {
    padding: 4px 0 3px;
}

.field {
    height: 19px;
    display: flex;
    align-items: center;
}

.field > label:first-child {
    width: 58px;
    padding-right: 4px;
    text-align: right;
    white-space: nowrap;
}

.field a {
    font-size: 9px;
}

.embed {
    width: 57px;
    height: 14px;
    margin-left: 3px;
    line-height: 12px;
    border: 1px solid #77757a;
    background-color: #dddbde;
}

.spacing {
    margin-left: auto;
    margin-right: 35px;
}

.swatch {
    width: 24px;
    height: 12px;
    background-color: #fff;
    border: 1px solid #444;
}

.field input {
    width: 9px;
    height: 9px;
    margin-left: 6px;
    appearance: none;
    background-color: #fff;
    border: 1px solid #444;
    position: relative;
}

.field input:checked::after {
    content: "";
    position: absolute;
    left: 2px;
    top: 0;
    width: 3px;
    height: 5px;
    border: solid #111;
    border-width: 0 1px 1px 0;
    rotate: 40deg;
}

.kern {
    margin-left: 3px;
}

.format-row {
    height: 24px;
    display: flex;
    align-items: center;
    gap: 2px;
    padding: 0 25px 0 58px;
    border-top: 1px solid #bbb9bc;
}

.format-row button {
    width: 14px;
    height: 14px;
    font-size: 8px;
    line-height: 11px;
    border: 1px solid #88868a;
    white-space: nowrap;
}

.format-row .ab {
    font-weight: 700;
    color: #111;
}

.format-row .ab b {
    color: #fff;
    background-color: #111;
}

.format-row svg {
    display: block;
    width: 12px;
    height: 12px;
}

.format-row .serif {
    font: 11px "Liberation Serif", serif;
    line-height: 11px;
    color: #111;
}

.format-row .sup {
    margin-left: auto;
}

.format-row sup, .format-row sub {
    font-size: 6px;
    line-height: 0;
}

.filters {
    width: 100%;
    margin-top: 1px;
    border-collapse: collapse;
    background-color: #dfdde0;
    border: 1px solid #77757a;
}

.filters th {
    height: 13px;
    padding-left: 3px;
    font-weight: 400;
    line-height: 11px;
    text-align: left;
    border-right: 1px solid #99979a;
    color: #111;
}

.filters th:nth-child(2) { width: 79px; }
.filters th:nth-child(3) { width: 26px; }

.filter-body {
    flex: 1;
    display: flex;
    align-items: flex-end;
    background-color: #dddbde;
}

.watermark {
    padding: 0 0 7px 10px;
    color: #f5f4f6;
    text-shadow: 0 0 1px #aaa8ab;
}

.brand {
    height: 58px;
    display: flex;
    align-items: flex-end;
    font-family: "Liberation Sans", "Noto Sans CJK SC", sans-serif;
    font-weight: 700;
}

.bai {
    font-size: 38px;
    line-height: 40px;
}

.brand svg {
    width: 54px;
    height: 58px;
    margin-left: 2px;
    overflow: visible;
}

.brand text {
    font-size: 22px;
    fill: #cfcdd0;
}

.jingyan {
    font-size: 30px;
    line-height: 36px;
}

.site {
    font-size: 21px;
    line-height: 26px;
}

.filter-foot {
    height: 11px;
    display: flex;
    align-items: center;
    gap: 2px;
    padding-left: 2px;
}

.filter-foot .pale {
    margin-right: 0;
    margin-left: 4px;
    background-color: #d6d4d7;
    opacity: 0.6;
}

/* tools */
.tools {
    width: 19px;
    background-color: #d6d4d7;
}

.tools-head {
    height: 15px;
    border-bottom: 1px solid #88868a;
    background-color: #c3c1c4;
}

.tools button {
    position: relative;
    display: block;
    width: 100%;
    height: 18px;
}

.tools .small {
    height: 14px;
}

.tools svg {
    display: block;
    width: 14px;
    height: 14px;
    margin: 0 auto;
}

.tools .on {
    background-color: #aeacaf;
    border: 1px solid #88868a;
}

.tools .more::after {
    content: "";
    position: absolute;
    right: 1px;
    bottom: 2px;
    border: 1px solid transparent;
    border-right-color: #222;
    border-bottom-color: #222;
}

.tools .letter {
    font: 700 15px "Liberation Serif", serif;
}

.tools hr {
    border: none;
    border-top: 1px solid #b3b1b4;
    margin: 1px 0;
}

.tools .tool-swatch {
    width: 17px;
    height: 14px;
    margin: 0 auto;
    background-color: #fff;
    border: 1px solid #77757a;
}

/* notes */
.note {
    position: absolute;
    left: 575px;
    top: 206px;
    font-family: "Noto Sans CJK SC", sans-serif;
    font-size: 18px;
    line-height: 21px;
    color: #d6201f;
    white-space: nowrap;
}

.note .indent {
    display: flex;
    align-items: center;
}

.blot {
    width: 19px;
    height: 18px;
    border-radius: 7px;
    background-color: #c3c1c4;
}

.tip {
    position: absolute;
    left: 585px;
    top: 297px;
    display: flex;
    align-items: center;
    gap: 11px;
    font-family: "Noto Sans CJK SC", sans-serif;
    font-size: 18px;
    line-height: 21px;
    color: #d6201f;
}

.ring {
    width: 11px;
    height: 12px;
    border: 2px solid #d6201f;
    border-radius: 50%;
}

.pointer {
    position: absolute;
    left: 19px;
    bottom: 31px;
    width: 44px;
    height: 70px;
}

.ime {
    position: absolute;
    left: 488px;
    bottom: 0;
    width: 124px;
    height: 21px;
    display: flex;
    align-items: center;
    justify-content: space-around;
    background-color: #fdf9f8;
    border: 1px solid #bfb3b0;
    border-radius: 2px;
    fill: #8c4540;
    color: #8c4540;
    font-size: 13px;
    font-weight: 700;
}

.ime svg {
    display: block;
    width: 13px;
    height: 13px;
}
```
